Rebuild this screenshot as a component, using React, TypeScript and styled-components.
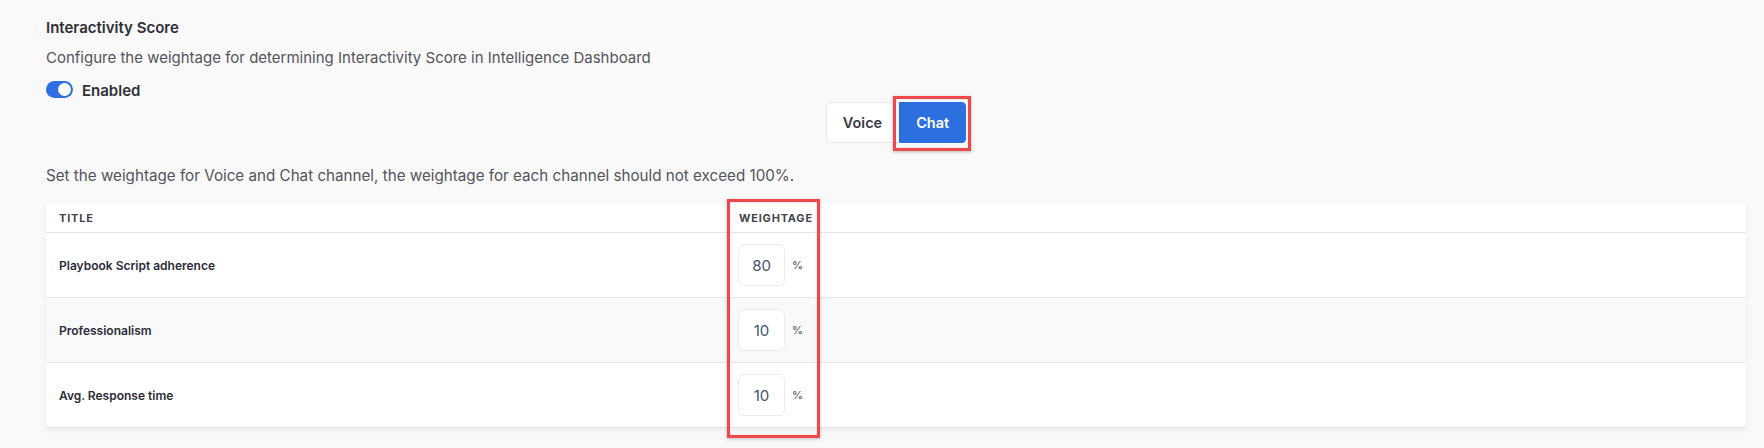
import React from "react";
import styled, { createGlobalStyle } from "styled-components";

const Global = createGlobalStyle`
  html, body { margin: 0; padding: 0; background: #f9f9f9; }
  body { font-family: Inter, "Noto Sans", sans-serif; color: #333; }
  * { box-sizing: border-box; }
`;

const Page = styled.div`
  padding: 18px 18px 20px 46px;
  display: flex;
  flex-direction: column;
`;

const Title = styled.h3`
  margin: 0;
  font-size: 15px;
  line-height: 20px;
  font-weight: 600;
  color: #2f2f35;
`;

const Desc = styled.p<{ $mt: number; $size: number }>`
  margin: ${(p) => p.$mt}px 0 0;
  font-size: ${(p) => p.$size}px;
  line-height: 20px;
  font-weight: 400;
  color: #54545c;
`;

const ToggleRow = styled.div`
  margin-top: 13px;
  display: flex;
  align-items: center;
  gap: 9px;
  height: 17px;
`;

const Switch = styled.span`
  position: relative;
  display: inline-block;
  width: 27px;
  height: 17px;
  border-radius: 9px;
  background: #2d6fe0;
  &::after {
    content: "";
    position: absolute;
    top: 2px;
    right: 2px;
    width: 13px;
    height: 13px;
    border-radius: 50%;
    background: #fff;
  }
`;

const ToggleLabel = styled.span`
  font-size: 15px;
  font-weight: 600;
  color: #2f2f35;
  padding-top: 2px;
`;

const Tabs = styled.div`
  margin-top: 4px;
  display: flex;
  justify-content: center;
`;

const TabButton = styled.button<{ $active?: boolean }>`
  height: 41px;
  padding: 0 16px;
  font-family: inherit;
  font-size: 14.5px;
  font-weight: 600;
  border: 1px solid ${(p) => (p.$active ? "#2b70de" : "#e8e8ea")};
  background: ${(p) => (p.$active ? "#2b70de" : "#fff")};
  color: ${(p) => (p.$active ? "#fff" : "#3a3a44")};
  border-radius: ${(p) => (p.$active ? "0 4px 4px 0" : "4px 0 0 4px")};
  cursor: pointer;
`;

const Highlight = styled.span`
  position: relative;
  display: inline-flex;
`;

const Annotation = styled.span<{ $t: number; $l: number; $r: number; $b: number }>`
  position: absolute;
  top: ${(p) => p.$t}px;
  left: ${(p) => p.$l}px;
  right: ${(p) => p.$r}px;
  bottom: ${(p) => p.$b}px;
  border: 3px solid #f0474a;
  box-shadow: 0 1px 3px rgba(0, 0, 0, 0.25), inset 0 0 2px rgba(0, 0, 0, 0.15);
  pointer-events: none;
`;

const TableWrap = styled.div`
  position: relative;
  margin-top: 17px;
  background: #fff;
  box-shadow: 0 2px 5px rgba(0, 0, 0, 0.06);
`;

const Row = styled.div<{ $head?: boolean; $alt?: boolean }>`
  display: grid;
  grid-template-columns: 680px 94px 1fr;
  align-items: center;
  height: ${(p) => (p.$head ? 30 : 65)}px;
  border-bottom: 1px solid #e6e6e8;
  background: ${(p) => (p.$alt ? "#f8f9fb" : "#fff")};
`;

const HeadCell = styled.div`
  padding: 0 13px;
  font-size: 11px;
  font-weight: 700;
  letter-spacing: 0.8px;
  text-transform: uppercase;
  color: #44444c;
`;

const LabelCell = styled.div`
  padding: 0 13px;
  font-size: 12px;
  font-weight: 600;
  color: #2c2c38;
`;

const WeightCell = styled.div`
  padding: 0 12px;
  display: flex;
  align-items: center;
  gap: 7px;
`;

const NumberBox = styled.input`
  width: 47px;
  height: 42px;
  border: 1px solid #ececef;
  border-radius: 6px;
  background: #fff;
  text-align: center;
  font-family: inherit;
  font-size: 15px;
  color: #46526c;
  outline: none;
`;

const Percent = styled.span`
  font-size: 11px;
  font-weight: 600;
  color: #6b6b75;
`;

const rows = [
  { title: "Playbook Script adherence", value: "80" },
  { title: "Professionalism", value: "10" },
  { title: "Avg. Response time", value: "10" },
];

export default function App() {
  return (
    <>
      <Global />
      <Page>
        <Title>Interactivity Score</Title>
        <Desc $mt={10} $size={15}>
          Configure the weightage for determining Interactivity Score in Intelligence Dashboard
        </Desc>
        <ToggleRow>
          <Switch />
          <ToggleLabel>Enabled</ToggleLabel>
        </ToggleRow>
        <Tabs>
          <TabButton>Voice</TabButton>
          <Highlight>
            <TabButton $active>Chat</TabButton>
            <Annotation $t={-6} $l={-6} $r={-5} $b={-8} />
          </Highlight>
        </Tabs>
        <Desc $mt={23} $size={15.2}>
          Set the weightage for Voice and Chat channel, the weightage for each channel should not exceed 100%.
        </Desc>
        <TableWrap>
          <Row $head>
            <HeadCell>Title</HeadCell>
            <HeadCell>Weightage</HeadCell>
            <div />
          </Row>
          {rows.map((r, i) => (
            <Row key={r.title} $alt={i === 1}>
              <LabelCell>{r.title}</LabelCell>
              <WeightCell>
                <NumberBox defaultValue={r.value} />
                <Percent>%</Percent>
              </WeightCell>
              <div />
            </Row>
          ))}
          <Annotation $t={-4} $l={681} $r={926} $b={-10} />
        </TableWrap>
      </Page>
    </>
  );
}
